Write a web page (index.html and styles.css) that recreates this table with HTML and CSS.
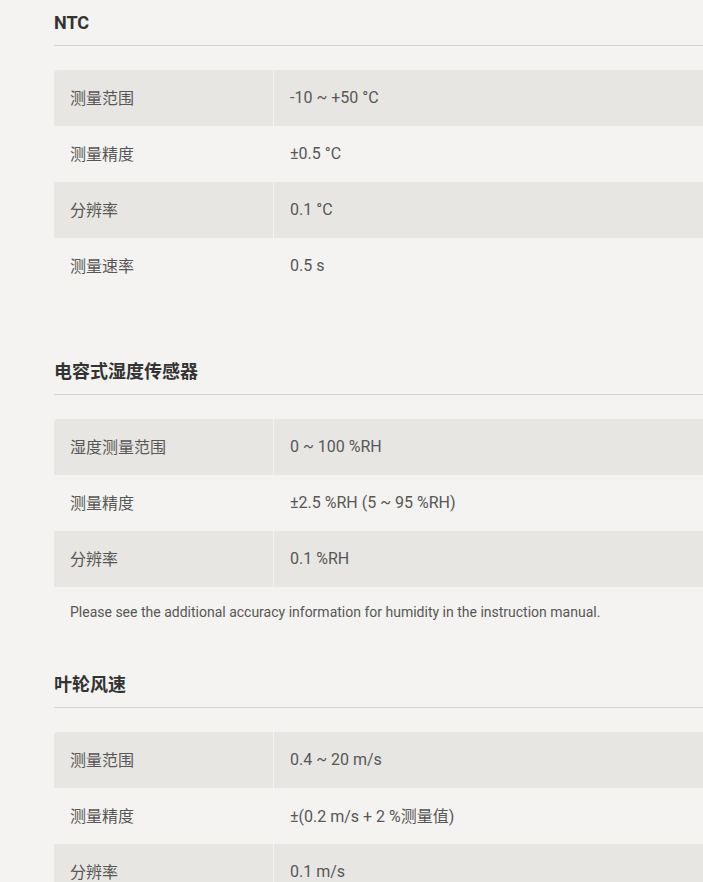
FILE: index.html
```html
<!DOCTYPE html>
<html lang="zh">
<head>
<meta charset="utf-8">
<title>技术参数</title>
<link rel="stylesheet" href="styles.css">
</head>
<body>
<main class="specs">
  <section class="spec-section">
    <h3 class="spec-title">NTC</h3>
    <div class="spec-table">
      <div class="spec-row"><div class="spec-key">测量范围</div><div class="spec-val">-10 ~ +50 °C</div></div>
      <div class="spec-row"><div class="spec-key">测量精度</div><div class="spec-val">±0.5 °C</div></div>
      <div class="spec-row"><div class="spec-key">分辨率</div><div class="spec-val">0.1 °C</div></div>
      <div class="spec-row"><div class="spec-key">测量速率</div><div class="spec-val">0.5 s</div></div>
    </div>
  </section>
  <section class="spec-section">
    <h3 class="spec-title">电容式湿度传感器</h3>
    <div class="spec-table">
      <div class="spec-row"><div class="spec-key">湿度测量范围</div><div class="spec-val">0 ~ 100 %RH</div></div>
      <div class="spec-row"><div class="spec-key">测量精度</div><div class="spec-val">±2.5 %RH (5 ~ 95 %RH)</div></div>
      <div class="spec-row"><div class="spec-key">分辨率</div><div class="spec-val">0.1 %RH</div></div>
    </div>
    <p class="spec-note">Please see the additional accuracy information for humidity in the instruction manual.</p>
  </section>
  <section class="spec-section">
    <h3 class="spec-title">叶轮风速</h3>
    <div class="spec-table">
      <div class="spec-row"><div class="spec-key">测量范围</div><div class="spec-val">0.4 ~ 20 m/s</div></div>
      <div class="spec-row"><div class="spec-key">测量精度</div><div class="spec-val">±(0.2 m/s + 2 %测量值)</div></div>
      <div class="spec-row"><div class="spec-key">分辨率</div><div class="spec-val">0.1 m/s</div></div>
    </div>
  </section>
</main>
</body>
</html>
```
FILE: styles.css
```css
html, body {
  margin: 0;
  padding: 0;
  background: #f4f3f1;
  overflow: hidden;
}
body {
  font-family: Roboto, "Noto Sans CJK SC", sans-serif;
  color: #575757;
}
.specs {
  padding: 10px 0 0 54px;
  width: 720px;
}
.spec-section {
  padding-bottom: 50px;
}
.spec-title {
  margin: 0;
  font-size: 18px;
  line-height: 24px;
  font-weight: 700;
  color: #333333;
  padding-top: 1px;
  padding-bottom: 10px;
  border-bottom: 1px solid #d3d2d0;
}
.spec-table {
  margin-top: 24px;
  margin-bottom: 15px;
  display: flex;
  flex-direction: column;
}
.spec-row {
  display: flex;
  height: 56px;
  align-items: stretch;
  font-size: 16px;
}
.spec-row:nth-child(odd) {
  background: #e8e6e3;
}
.spec-row:first-child {
  border-top-left-radius: 4px;
}
.spec-key {
  width: 203px;
  flex: none;
  padding-left: 16px;
  padding-bottom: 2px;
  display: flex;
  align-items: center;
  border-right: 1px solid #f4f3f1;
}
.spec-val {
  flex: 1;
  padding-left: 16px;
  padding-bottom: 2px;
  display: flex;
  align-items: center;
}
.spec-note {
  margin: 0;
  padding-left: 16px;
  font-size: 14px;
  line-height: 20px;
  color: #575757;
}
```
